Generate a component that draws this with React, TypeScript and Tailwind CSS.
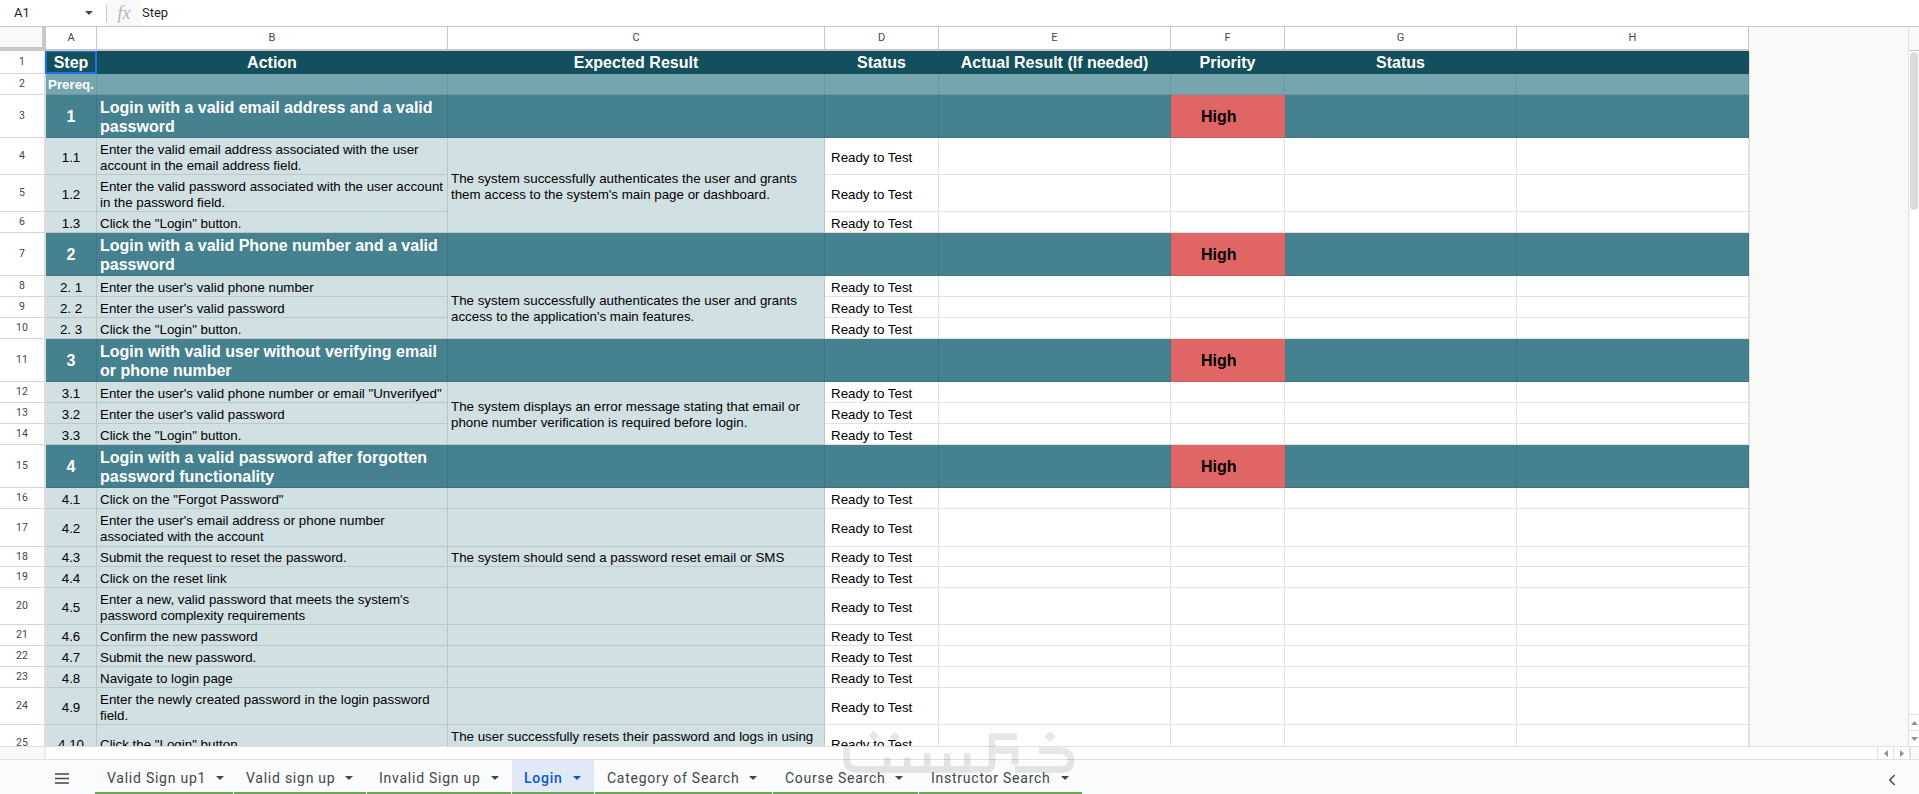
import type { ReactNode } from "react";
import { ChevronLeft } from "lucide-react";

type RowKind = "head" | "pre" | "section" | "step";

type Row = {
  kind: RowKind;
  h: number;
  step?: string;
  action?: string;
  expected?: string;
  status?: string;
  actual?: string;
  priority?: string;
  status2?: string;
};

const READY = "Ready to Test";

const rows: Row[] = [
  { kind: "head", h: 23, step: "Step", action: "Action", expected: "Expected Result", status: "Status", actual: "Actual Result (If needed)", priority: "Priority", status2: "Status" },
  { kind: "pre", h: 21, step: "Prereq." },
  { kind: "section", h: 43, step: "1", action: "Login with a valid email address and a valid password", priority: "High" },
  { kind: "step", h: 37, step: "1.1", action: "Enter the valid email address associated with the user account in the email address field.", status: READY },
  { kind: "step", h: 37, step: "1.2", action: "Enter the valid password associated with the user account in the password field.", status: READY },
  { kind: "step", h: 21, step: "1.3", action: 'Click the "Login" button.', status: READY },
  { kind: "section", h: 43, step: "2", action: "Login with a valid Phone number and a valid password", priority: "High" },
  { kind: "step", h: 21, step: "2. 1", action: "Enter the user's valid phone number", status: READY },
  { kind: "step", h: 21, step: "2. 2", action: "Enter the user's valid password", status: READY },
  { kind: "step", h: 21, step: "2. 3", action: 'Click the "Login" button.', status: READY },
  { kind: "section", h: 43, step: "3", action: "Login with valid user without verifying email or phone number", priority: "High" },
  { kind: "step", h: 21, step: "3.1", action: 'Enter the user\'s valid phone number or email "Unverifyed"', status: READY },
  { kind: "step", h: 21, step: "3.2", action: "Enter the user's valid password", status: READY },
  { kind: "step", h: 21, step: "3.3", action: 'Click the "Login" button.', status: READY },
  { kind: "section", h: 43, step: "4", action: "Login with a valid password after forgotten password functionality", priority: "High" },
  { kind: "step", h: 21, step: "4.1", action: 'Click on the "Forgot Password"', status: READY },
  { kind: "step", h: 38, step: "4.2", action: "Enter the user's email address or phone number associated with the account", status: READY },
  { kind: "step", h: 20, step: "4.3", action: "Submit the request to reset the password.", expected: "The system should send a password reset email or SMS", status: READY },
  { kind: "step", h: 21, step: "4.4", action: "Click on the reset link", status: READY },
  { kind: "step", h: 37, step: "4.5", action: "Enter a new, valid password that meets the system's password complexity requirements", status: READY },
  { kind: "step", h: 21, step: "4.6", action: "Confirm the new password", status: READY },
  { kind: "step", h: 21, step: "4.7", action: "Submit the new password.", status: READY },
  { kind: "step", h: 21, step: "4.8", action: "Navigate to login page", status: READY },
  { kind: "step", h: 37, step: "4.9", action: "Enter the newly created password in the login password field.", status: READY },
  { kind: "step", h: 37, step: "4.10", action: 'Click the "Login" button.', expected: "The user successfully resets their password and logs in using the new password.", status: READY },
];

// merged "Expected Result" cells, keyed by the row they start on (0-based)
const merged: Record<number, string> = {
  3: "The system successfully authenticates the user and grants them access to the system's main page or dashboard.",
  7: "The system successfully authenticates the user and grants access to the application's main features.",
  11: "The system displays an error message stating that email or phone number verification is required before login.",
};
const coveredByMerge = [4, 5, 8, 9, 12, 13];

const columns = [
  { letter: "A", w: "w-[51px]" },
  { letter: "B", w: "w-[351px]" },
  { letter: "C", w: "w-[377px]" },
  { letter: "D", w: "w-[114px]" },
  { letter: "E", w: "w-[232px]" },
  { letter: "F", w: "w-[114px]" },
  { letter: "G", w: "w-[232px]" },
  { letter: "H", w: "w-[232px]" },
];

const tabs = [
  { label: "Valid Sign up1", w: "w-[138px]" },
  { label: "Valid sign up", w: "w-[132px]" },
  { label: "Invalid Sign up", w: "w-[144px]" },
  { label: "Login", w: "w-[82px]", active: true },
  { label: "Category of Search", w: "w-[177px]" },
  { label: "Course Search", w: "w-[145px]" },
  { label: "Instructor Search", w: "w-[163px]" },
];

const rowBg: Record<RowKind, string> = {
  head: "bg-[#134f5c] border-[#134f5c]",
  pre: "bg-[#76a5af] border-[#6b98a2]",
  section: "bg-[#45818e] border-[#3f7582]",
  step: "bg-[#d0e0e3] border-[#b9c8cb]",
};

function Caret({ className }: { className?: string }) {
  return (
    <svg width="8" height="4" viewBox="0 0 8 4" className={className}>
      <path d="M0 0h8L4 4z" fill="currentColor" />
    </svg>
  );
}

function Cell({ row, className, children }: { row: Row; className: string; children?: ReactNode }) {
  return (
    <div className={`flex shrink-0 items-center border-r border-b ${row.kind === "step" ? "pt-[3px]" : "pt-[2px]"} ${rowBg[row.kind]} ${className}`}>
      {children}
    </div>
  );
}

function PlainCell({ w, children }: { w: string; children?: ReactNode }) {
  return (
    <div className={`flex shrink-0 items-center border-r border-b border-[#e1e1e1] bg-white pt-[3px] ${w}`}>
      {children}
    </div>
  );
}

function SheetRow({ row, index }: { row: Row; index: number }) {
  const isHead = row.kind === "head";
  const isSection = row.kind === "section";
  const isPre = row.kind === "pre";
  const isStep = row.kind === "step";
  const centerBold = "justify-center text-center text-[16px] leading-5 font-bold text-white";
  const body = "px-[3px] text-[13.33px] leading-4";

  return (
    <div className="flex" style={{ height: row.h }}>
      <div className="flex w-[46px] shrink-0 items-center justify-center border-r-2 border-b border-r-[#dcdcdc] border-b-[#d5d5d5] bg-white font-['Roboto',sans-serif] text-[10.5px] text-[#444746]">
        {index + 1}
      </div>

      <Cell row={row} className={`relative w-[51px] ${isStep ? "justify-center text-[13.33px]" : centerBold}`}>
        {isPre ? <span className="text-[13.33px]">{row.step}</span> : row.step}
        {isHead && <span className="absolute -inset-px border-2 border-[#1a73e8]" />}
      </Cell>

      <Cell
        row={row}
        className={`w-[351px] ${isHead ? centerBold : isSection ? "px-[3px] text-[16px] leading-[19px] font-bold text-white" : body}`}
      >
        {row.action}
      </Cell>

      {coveredByMerge.includes(index) ? (
        <div className="w-[377px] shrink-0 bg-[#d0e0e3]" />
      ) : merged[index] ? (
        <div className="relative w-[377px] shrink-0">
          <div
            className={`absolute inset-x-0 top-0 z-10 flex items-center border-r border-b border-[#b9c8cb] bg-[#d0e0e3] pt-[3px] ${body}`}
            style={{ height: rows[index].h + rows[index + 1].h + rows[index + 2].h }}
          >
            {merged[index]}
          </div>
        </div>
      ) : (
        <Cell row={row} className={`w-[377px] ${isHead ? centerBold : body}`}>
          {row.expected}
        </Cell>
      )}

      {isStep ? (
        <PlainCell w="w-[114px]">
          <span className="px-1.5 text-[13.33px] whitespace-nowrap">{row.status}</span>
        </PlainCell>
      ) : (
        <Cell row={row} className={`w-[114px] ${centerBold}`}>{row.status}</Cell>
      )}

      {isStep ? (
        <>
          <PlainCell w="w-[232px]" />
          <PlainCell w="w-[114px]" />
          <PlainCell w="w-[232px]" />
          <PlainCell w="w-[232px]" />
        </>
      ) : (
        <>
          <Cell row={row} className={`w-[232px] ${centerBold}`}>{row.actual}</Cell>
          {isSection ? (
            <div className="flex w-[114px] shrink-0 items-center border-b border-[#cc5c5c] bg-[#e06666] pt-[2px] pl-[30px] text-[16px] font-bold text-black">
              {row.priority}
            </div>
          ) : (
            <Cell row={row} className={`w-[114px] ${centerBold}`}>{row.priority}</Cell>
          )}
          <Cell row={row} className={`w-[232px] ${centerBold}`}>{row.status2}</Cell>
          <Cell row={row} className="w-[232px]" />
        </>
      )}
    </div>
  );
}

// the site logo stamped faintly over the bottom of the capture
function Watermark() {
  return (
    <svg
      width="260"
      height="74"
      viewBox="0 0 780 222"
      className="pointer-events-none absolute top-[720px] left-[830px] z-20 opacity-[0.09]"
    >
      <g fill="none" stroke="#000" strokeWidth="20">
        <path d="M50 78v40q0 30 30 30h390q16 0 16-20V50h75" />
        <path d="M172 112v36M232 112v36M292 100v48M352 100v48M412 100v48" />
        <path d="M495 92h60v42" />
        <path d="M555 148h140q28 0 28-26 0-30-36-30h-60" />
      </g>
      <g fill="#000">
        <rect x="120" y="36" width="22" height="22" transform="rotate(45 131 47)" />
        <rect x="184" y="40" width="22" height="22" transform="rotate(45 195 51)" />
        <rect x="648" y="38" width="24" height="24" transform="rotate(45 660 50)" />
      </g>
    </svg>
  );
}

export default function App() {
  return (
    <div className="relative flex h-[794px] w-[1919px] flex-col overflow-hidden bg-white font-['Liberation_Sans',Arial,sans-serif] text-black">
      {/* formula bar */}
      <div className="flex h-[27px] shrink-0 items-center border-b border-[#c7c7c7] bg-white font-['Roboto',sans-serif] text-[13px] text-[#1f1f1f]">
        <span className="w-[85px] pl-3.5">A1</span>
        <Caret className="mr-[13px] text-[#444746]" />
        <div className="h-[18px] w-px bg-[#c7c7c7]" />
        <div className="flex h-full w-[34px] items-center justify-center bg-[#f8f9fa] font-['Liberation_Serif',serif] text-[18px] text-[#b0b3b8] italic">
          fx
        </div>
        <span className="ml-px">Step</span>
      </div>

      <div className="flex min-h-0 flex-1">
        <div className="flex w-[1908px] shrink-0 flex-col">
          {/* column letters */}
          <div className="flex h-[24px] shrink-0">
            <div className="w-[46px] shrink-0 border-r-4 border-b-4 border-[#c7c7c7] bg-[#f8f9fa]" />
            <div className="flex border-b-2 border-[#c7c7c7]">
              {columns.map((c) => (
                <div
                  key={c.letter}
                  className={`flex items-center justify-center border-r border-[#c7c7c7] bg-white font-['Roboto',sans-serif] text-[11px] text-[#444746] ${c.w}`}
                >
                  {c.letter}
                </div>
              ))}
            </div>
            <div className="flex-1 bg-[#f8faf8]" />
          </div>

          {/* grid */}
          <div className="flex h-[695px] shrink-0 overflow-hidden bg-[#f8faf8]">
            <div className="w-[1749px] shrink-0">
              {rows.map((row, i) => (
                <SheetRow key={i} row={row} index={i} />
              ))}
            </div>
            <div className="flex-1 border-l border-[#e1e1e1]" />
          </div>
        </div>

        {/* vertical scrollbar */}
        <div className="flex flex-1 flex-col border-l border-[#e1e1e1] bg-white">
          <div className="h-[24px] shrink-0 border-b border-[#c7c7c7] bg-[#f8faf8]" />
          <div className="flex-1 px-px pt-px">
            <div className="h-[158px] rounded-md bg-[#dadce0]" />
          </div>
          <div className="flex h-4 items-center justify-center border-t border-[#e1e1e1]">
            <svg width="7" height="4" viewBox="0 0 7 4"><path d="M0 4h7L3.5 0z" fill="#8f8f9f" /></svg>
          </div>
          <div className="flex h-4 items-center justify-center border-t border-[#e1e1e1]">
            <svg width="7" height="4" viewBox="0 0 7 4"><path d="M0 0h7L3.5 4z" fill="#8f8f9f" /></svg>
          </div>
        </div>
      </div>

      {/* horizontal scrollbar */}
      <div className="flex h-[13px] shrink-0 border-t border-[#e1e1e1] bg-white">
        <div className="w-[46px] border-r-2 border-[#ececec] bg-[#f8f9fa]" />
        <div className="flex-1" />
        <div className="flex w-4 items-center justify-center border-l border-[#e1e1e1]">
          <svg width="4" height="7" viewBox="0 0 4 7"><path d="M4 0v7L0 3.5z" fill="#8f8f9f" /></svg>
        </div>
        <div className="flex w-4 items-center justify-center border-l border-[#e1e1e1]">
          <svg width="4" height="7" viewBox="0 0 4 7"><path d="M0 0v7l4-3.5z" fill="#8f8f9f" /></svg>
        </div>
        <div className="w-2.5 border-l-2 border-[#e1e1e1] bg-[#f8faf8]" />
      </div>

      {/* sheet tabs */}
      <div className="flex h-[35px] shrink-0 items-stretch border-t border-[#e1e1e1] bg-[#f9fbfd] font-['Roboto',sans-serif] text-[14px] tracking-[0.75px] text-[#444746]">
        <div className="flex w-[95px] items-center pt-[3px] pl-[55px]">
          <svg width="14" height="11" viewBox="0 0 14 11">
            <path d="M0 1h14M0 5.500h14M0 10h14" stroke="currentColor" strokeWidth="1.6" />
          </svg>
        </div>
        {tabs.map((t) => (
          <div
            key={t.label}
            className={`mr-px flex items-center gap-[10px] border-b-2 border-[#6aa84f] pt-[4px] pl-3 ${t.w} ${t.active ? "bg-[#e1e9f7] font-medium text-[#0b57d0]" : ""}`}
          >
            <span className="whitespace-nowrap">{t.label}</span>
            <Caret />
          </div>
        ))}
        <ChevronLeft size={18} strokeWidth={2} className="mt-[11px] mr-[18px] ml-auto text-[#444746]" />
      </div>

      <Watermark />
    </div>
  );
}
